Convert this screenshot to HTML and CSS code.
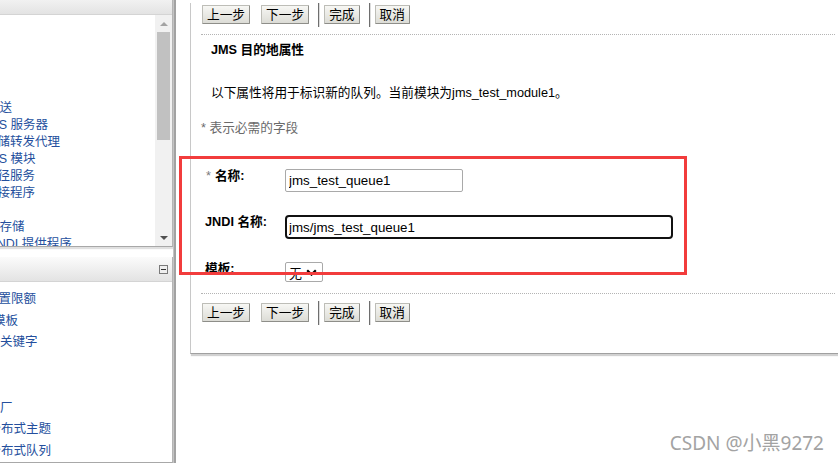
FILE: index.html
```html
<!DOCTYPE html>
<html lang="zh-CN">
<head>
<meta charset="utf-8">
<title>JMS 目的地属性</title>
<link rel="stylesheet" href="styles.css">
</head>
<body>
<div class="page">
  <aside class="side">
    <section class="box box-tree">
      <div class="box-head"></div>
      <div class="box-body">
        <ul class="tree">
          <li class="l2">消息传送</li>
          <li class="l3 jms">JMS 服务器</li>
          <li class="l3">存储转发代理</li>
          <li class="l3 jms">JMS 模块</li>
          <li class="l3">路径服务</li>
          <li class="l3">桥接程序</li>
          <li class="l2">数据源</li>
          <li class="l2">持久性存储</li>
          <li class="l2">外部 JNDI 提供程序</li>
        </ul>
        <div class="scrollbar">
          <span class="sb-btn"><span class="tri-up"></span></span>
          <span class="sb-thumb"></span>
          <span class="sb-fill"></span>
          <span class="sb-btn"><span class="tri-down"></span></span>
        </div>
      </div>
    </section>
    <section class="box box-help">
      <div class="box-head"><span class="collapse"><span class="dash"></span></span></div>
      <ul class="help">
        <li class="h1">配置限额</li>
        <li class="h2">配置模板</li>
        <li class="h3">配置目标关键字</li>
        <li class="h0">创建队列</li>
        <li class="h0">创建主题</li>
        <li class="h6">创建连接工厂</li>
        <li class="h7">创建分布式主题</li>
        <li class="h7">创建分布式队列</li>
      </ul>
    </section>
  </aside>
  <div class="splitter"></div>
  <main class="main">
    <div class="panel">
      <div class="btnrow">
        <button class="btn btn-prev">上一步</button>
        <button class="btn">下一步</button>
        <span class="sep"></span>
        <button class="btn">完成</button>
        <span class="sep"></span>
        <button class="btn">取消</button>
      </div>
      <div class="rule"></div>
      <h2 class="title">JMS 目的地属性</h2>
      <p class="desc">以下属性将用于标识新的队列。当前模块为jms_test_module1。</p>
      <p class="note">* 表示必需的字段</p>
      <div class="form">
        <div class="f-label"><span class="req">*</span>名称:</div>
        <div class="f-field"><input class="input input-name" type="text" value="jms_test_queue1"></div>
        <div class="f-label">JNDI 名称:</div>
        <div class="f-field"><input class="input input-jndi is-focused" type="text" value="jms/jms_test_queue1"></div>
        <div class="f-label f-label-sel">模板:</div>
        <div class="f-field">
          <div class="select"><span>无</span>
            <svg class="chev" width="11" height="7" viewBox="0 0 11 7"><path d="M1.2 1.3 L5.5 5.6 L9.8 1.3" fill="none" stroke="#000" stroke-width="2.2"/></svg>
          </div>
        </div>
      </div>
      <div class="rule rule-2"></div>
      <div class="btnrow btnrow-2">
        <button class="btn btn-prev">上一步</button>
        <button class="btn">下一步</button>
        <span class="sep"></span>
        <button class="btn">完成</button>
        <span class="sep"></span>
        <button class="btn">取消</button>
      </div>
    </div>
  </main>
  <div class="highlight"></div>
  <div class="watermark">CSDN @小黑9272</div>
</div>
</body>
</html>
```
FILE: styles.css
```css
* { box-sizing: border-box; }
html, body { margin: 0; padding: 0; background: #fff; }
body {
  font-family: "Liberation Sans", "Noto Sans CJK SC", sans-serif;
  font-size: 12.7px;
  color: #000;
}
.page {
  position: relative;
  display: flex;
  width: 838px;
  height: 463px;
  overflow: hidden;
}

/* ---------- left column ---------- */
.side {
  width: 173px;
  flex: none;
  display: flex;
  flex-direction: column;
}
.box {
  background: #fff;
  border-right: 1px solid #b4b4b4;
  border-bottom: 1px solid #a8a8a8;
  box-shadow: 0 2px 1px rgba(0, 0, 0, 0.12);
}
.box-tree { margin-top: -10px; }
.box-help { margin-top: 10px; flex: 1; overflow: hidden; }
.box-head {
  height: 25px;
  background: linear-gradient(#fbfbfb, #e3e3e3);
  border-bottom: 1px solid #d4d4d4;
  display: flex;
  align-items: center;
  justify-content: flex-end;
  padding-right: 4px;
}
.collapse {
  width: 9px;
  height: 9px;
  border: 1px solid #7a7a7a;
  background: #efefef;
  display: flex;
  align-items: center;
  justify-content: center;
  margin-top: 1px;
}
.dash { width: 5px; height: 1px; background: #333; }

.box-body {
  height: 231px;
  display: flex;
  overflow: hidden;
}
.tree {
  flex: 1;
  list-style: none;
  margin: 0 0 0 -70px;
  padding: 84.5px 0 0;
  font-size: 12.5px;
  line-height: 17px;
  color: #244f9d;
  white-space: nowrap;
  overflow: hidden;
}
.tree .l2 { padding-left: 32px; }
.tree .l3 { padding-left: 55px; }
.tree .l3.jms { padding-left: 52px; }

.scrollbar {
  width: 17px;
  flex: none;
  background: #f1f1f1;
  display: flex;
  flex-direction: column;
  align-items: center;
}
.sb-btn {
  height: 17px;
  width: 17px;
  display: flex;
  align-items: center;
  justify-content: center;
}
.tri-up, .tri-down {
  width: 0;
  height: 0;
  border-left: 4px solid transparent;
  border-right: 4px solid transparent;
}
.tri-up { border-bottom: 4px solid #a3a3a3; }
.tri-down { border-top: 4px solid #505050; }
.sb-thumb {
  width: 13px;
  height: 108px;
  background: #c1c1c1;
}
.sb-fill { flex: 1; }

.help {
  list-style: none;
  margin: 0 0 0 -70px;
  padding: 7px 0 0;
  font-size: 12.5px;
  line-height: 21.7px;
  color: #244f9d;
  white-space: nowrap;
}
.help .h0 { padding-left: 0; }
.help .h1 { padding-left: 56px; }
.help .h2 { padding-left: 38px; }
.help .h3 { padding-left: 20px; }
.help .h6 { padding-left: 7.5px; }
.help .h7 { padding-left: 33.5px; }

.splitter {
  width: 3px;
  flex: none;
  background: #a2a2a2;
  border-left: 1px solid #c4c4c4;
}

/* ---------- main panel ---------- */
.main {
  flex: 1;
  min-width: 0;
}
.panel {
  margin-left: 14px;
  margin-right: -10px;
  height: 351px;
  border-left: 1px solid #c8c8c8;
  border-bottom: 1px solid #a0a0a0;
  box-shadow: 1px 2px 1px rgba(0, 0, 0, 0.18);
  padding: 0 13px 0 11px;
}
.btnrow {
  display: flex;
  align-items: flex-start;
  height: 24px;
  margin-top: 3px;
}
.btn {
  font: inherit;
  font-size: 12.7px;
  height: 19px;
  line-height: 16px;
  margin-top: 2px;
  padding: 0 4px;
  color: #000;
  background: linear-gradient(#f7f7f4, #dcdcd6);
  border: 1px solid;
  border-color: #bdbdb7 #8e8e89 #8e8e89 #bdbdb7;
  border-radius: 1px;
}
.btn-prev { margin-right: 11px; }
.sep {
  width: 1px;
  height: 24px;
  background: #6e6e6e;
  box-shadow: 1px 0 0 #dcdcdc;
  margin: 0 5px 0 9px;
}
.rule {
  margin: 7px 0 0 -1px;
  border-top: 1px dotted #b4b4b4;
}
.title {
  margin: 7px 0 0;
  padding-left: 9px;
  font-size: 12.7px;
  line-height: 16px;
  font-weight: bold;
}
.desc {
  margin: 27px 0 0;
  padding-left: 9px;
  line-height: 16px;
}
.note {
  margin: 19px 0 0 -1px;
  line-height: 16px;
  color: #6a6a6a;
}
.form {
  display: grid;
  grid-template-columns: 80px auto;
  row-gap: 23px;
  margin: 33px 0 0 3px;
  align-items: start;
}
.f-label {
  font-weight: bold;
  line-height: 16px;
  margin-top: -1px;
  white-space: nowrap;
}
.f-label-sel { margin-top: -1.5px; }
.req {
  color: #7a7a7a;
  font-weight: normal;
  margin: 0 4px 0 1px;
}
.f-field { justify-self: start; }
.input {
  display: block;
  font-family: "Liberation Sans", sans-serif;
  font-size: 13.33px;
  color: #000;
  background: #fff;
  margin: 0;
  outline: none;
}
.input-name {
  width: 178px;
  height: 23px;
  padding: 0 3px;
  border: 1px solid #a9a9a9;
  border-radius: 2px;
}
.input-jndi {
  width: 388px;
  height: 24px;
  padding: 0 2px;
  border: 2px solid #111;
  border-radius: 4px;
}
.select {
  width: 38px;
  height: 20px;
  border: 1px solid #a9a9a9;
  border-radius: 2px;
  background: #fff;
  display: flex;
  align-items: center;
  padding: 0 0 0 3px;
  gap: 4px;
  font-size: 13px;
}
.chev { flex: none; }
.rule-2 { margin-top: 11px; }
.btnrow-2 { margin-top: 7px; }

/* ---------- overlays ---------- */
.highlight {
  position: absolute;
  left: 179px;
  top: 156px;
  width: 508px;
  height: 119px;
  border: 3px solid #f23c3c;
}
.watermark {
  position: absolute;
  right: 14px;
  top: 431px;
  font-family: "Noto Sans", "Noto Sans CJK SC", sans-serif;
  font-size: 19px;
  line-height: 24px;
  color: #a3a3a3;
  text-shadow: 0 0 2px #fff;
  white-space: nowrap;
}
```
